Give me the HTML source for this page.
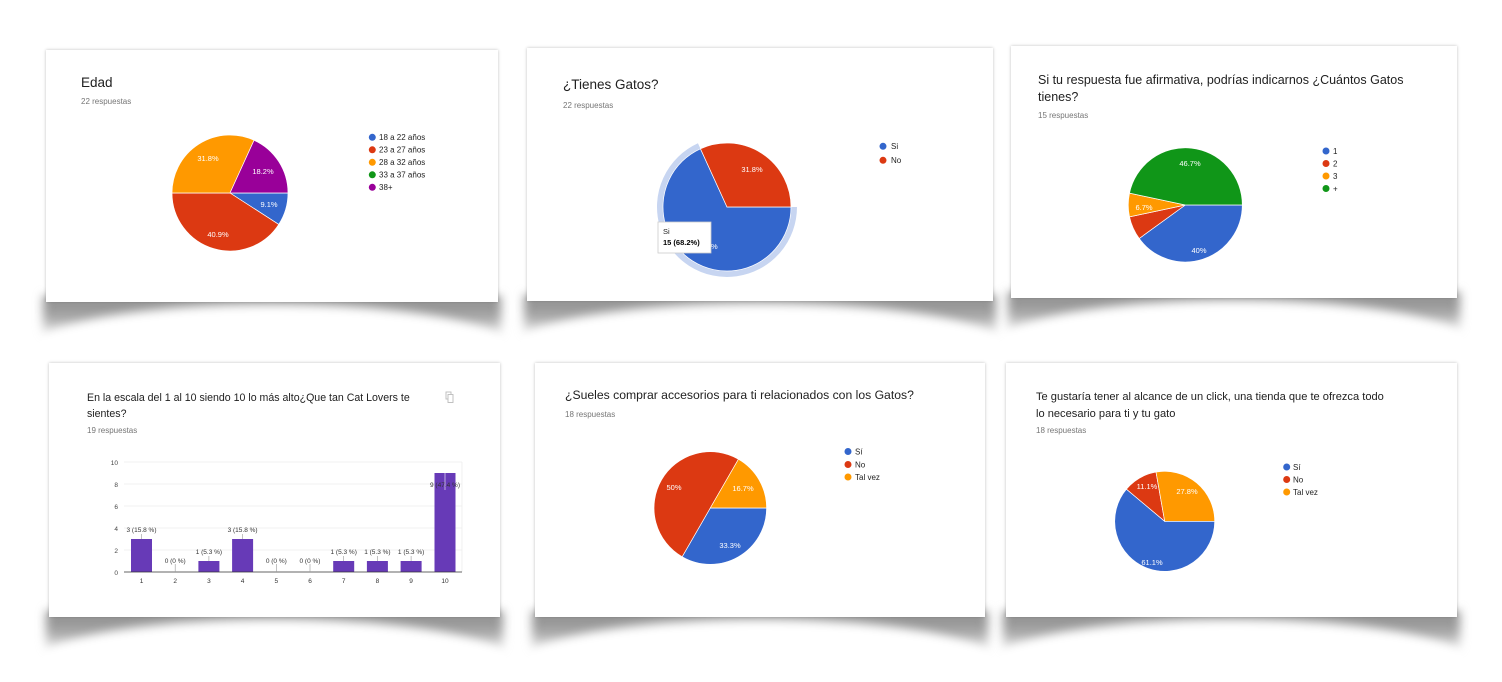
<!DOCTYPE html>
<html><head><meta charset="utf-8">
<style>
html,body{margin:0;padding:0;background:#fff;width:1502px;height:682px;overflow:hidden;position:relative;font-family:"Liberation Sans",Arial,sans-serif}
.wrap{position:absolute}
.sh{position:absolute;left:-3px;right:-3px;top:calc(100% - 6px);height:40px;background:linear-gradient(#888,#a8a8a8 55%,rgba(220,220,220,0));filter:blur(5px)}
.el{position:absolute;left:-2%;width:104%;top:calc(100% + 2px);height:90px;border-radius:50%;background:#fff;filter:blur(5px)}
.card{position:absolute;inset:0;background:#fff;box-shadow:0 0 3px rgba(0,0,0,.25)}
svg{position:absolute;left:0;top:0}
</style></head><body>
<div class="wrap" style="left:46px;top:50px;width:452px;height:252px"><div class="sh"></div><div class="el"></div><div class="card"></div></div>
<div class="wrap" style="left:527px;top:48px;width:466px;height:253px"><div class="sh"></div><div class="el"></div><div class="card"></div></div>
<div class="wrap" style="left:1011px;top:46px;width:446px;height:252px"><div class="sh"></div><div class="el"></div><div class="card"></div></div>
<div class="wrap" style="left:49px;top:363px;width:451px;height:254px"><div class="sh"></div><div class="el"></div><div class="card"></div></div>
<div class="wrap" style="left:535px;top:363px;width:450px;height:254px"><div class="sh"></div><div class="el"></div><div class="card"></div></div>
<div class="wrap" style="left:1006px;top:363px;width:451px;height:254px"><div class="sh"></div><div class="el"></div><div class="card"></div></div>

<svg width="1502" height="682" viewBox="0 0 1502 682" font-family="Liberation Sans, Arial, sans-serif">
<g fill="#212121">
<text x="81" y="87" font-size="13.5">Edad</text>
<text x="563" y="89" font-size="13.5">¿Tienes Gatos?</text>
<text x="1038" y="84" font-size="12.5">Si tu respuesta fue afirmativa, podrías indicarnos ¿Cuántos Gatos</text>
<text x="1038" y="101" font-size="12.5">tienes?</text>
<text x="87" y="401" font-size="10.6">En la escala del 1 al 10 siendo 10 lo más alto¿Que tan Cat Lovers te</text>
<text x="87" y="417" font-size="10.6">sientes?</text>
<text x="565" y="399" font-size="12.2">¿Sueles comprar accesorios para ti relacionados con los Gatos?</text>
<text x="1036" y="400" font-size="11.1">Te gustaría tener al alcance de un click, una tienda que te ofrezca todo</text>
<text x="1036" y="417" font-size="11.1">lo necesario para ti y tu gato</text>
</g>
<g fill="#757575" font-size="8">
<text x="81" y="104">22 respuestas</text>
<text x="563" y="108">22 respuestas</text>
<text x="1038" y="118">15 respuestas</text>
<text x="87" y="433">19 respuestas</text>
<text x="565" y="417">18 respuestas</text>
<text x="1036" y="433">18 respuestas</text>
</g>

<g stroke="#fff" stroke-width="0.7">
<path d="M230,193 L288,193 A58,58 0 0 1 278.75,224.42 Z" fill="#3366cc"/>
<path d="M230,193 L278.75,224.42 A58,58 0 0 1 172,193 Z" fill="#dc3912"/>
<path d="M230,193 L172,193 A58,58 0 0 1 254.05,140.22 Z" fill="#ff9900"/>
<path d="M230,193 L254.05,140.22 A58,58 0 0 1 288,193 Z" fill="#990099"/>
</g>
<g fill="#fff" font-size="7.5" text-anchor="middle">
<text x="269" y="207">9.1%</text><text x="218" y="237">40.9%</text><text x="208" y="161">31.8%</text><text x="263" y="174">18.2%</text>
</g>
<g font-size="8" fill="#222">
<circle cx="372.3" cy="137.3" r="3.5" fill="#3366cc"/><text x="379" y="140">18 a 22 años</text>
<circle cx="372.3" cy="149.8" r="3.5" fill="#dc3912"/><text x="379" y="152.5">23 a 27 años</text>
<circle cx="372.3" cy="162.3" r="3.5" fill="#ff9900"/><text x="379" y="165">28 a 32 años</text>
<circle cx="372.3" cy="174.8" r="3.5" fill="#109618"/><text x="379" y="177.5">33 a 37 años</text>
<circle cx="372.3" cy="187.3" r="3.5" fill="#990099"/><text x="379" y="190">38+</text>
</g>

<path d="M794,207 A67,67 0 1 1 699.2,146" fill="none" stroke="#c7d5f1" stroke-width="6"/>
<g stroke="#fff" stroke-width="0.7">
<path d="M727,207 L791,207 A64,64 0 1 1 700.46,148.76 Z" fill="#3366cc"/>
<path d="M727,207 L700.46,148.76 A64,64 0 0 1 791,207 Z" fill="#dc3912"/>
</g>
<text x="752" y="172" fill="#fff" font-size="7.5" text-anchor="middle">31.8%</text>
<text x="711" y="249" fill="#fff" font-size="7.5">%</text>
<rect x="658" y="222" width="53" height="31" fill="#fff" stroke="#ccc" stroke-width="0.8"/>
<text x="663" y="234" font-size="7.5" fill="#222">Si</text>
<text x="663" y="245" font-size="7.5" fill="#000" font-weight="bold">15 (68.2%)</text>
<g font-size="8" fill="#222">
<circle cx="883" cy="146.3" r="3.5" fill="#3366cc"/><text x="891" y="149">Si</text>
<circle cx="883" cy="160.3" r="3.5" fill="#dc3912"/><text x="891" y="163">No</text>
</g>

<g stroke="#fff" stroke-width="0.7">
<path d="M1185.3,205 L1242.3,205 A57,57 0 0 1 1139.2,238.5 Z" fill="#3366cc"/>
<path d="M1185.3,205 L1139.2,238.5 A57,57 0 0 1 1129.5,216.85 Z" fill="#dc3912"/>
<path d="M1185.3,205 L1129.5,216.85 A57,57 0 0 1 1129.5,193.15 Z" fill="#ff9900"/>
<path d="M1185.3,205 L1129.5,193.15 A57,57 0 0 1 1242.3,205 Z" fill="#109618"/>
</g>
<g fill="#fff" font-size="7.5" text-anchor="middle">
<text x="1190" y="166">46.7%</text><text x="1144" y="210">6.7%</text><text x="1199" y="253">40%</text>
</g>
<g font-size="8" fill="#222">
<circle cx="1326" cy="151" r="3.5" fill="#3366cc"/><text x="1333" y="154">1</text>
<circle cx="1326" cy="163.5" r="3.5" fill="#dc3912"/><text x="1333" y="166.5">2</text>
<circle cx="1326" cy="176" r="3.5" fill="#ff9900"/><text x="1333" y="179">3</text>
<circle cx="1326" cy="188.5" r="3.5" fill="#109618"/><text x="1333" y="191.5">+</text>
</g>

<g stroke="#ececec" stroke-width="0.8">
<line x1="124" y1="462" x2="462" y2="462"/><line x1="124" y1="484" x2="462" y2="484"/>
<line x1="124" y1="506" x2="462" y2="506"/><line x1="124" y1="528" x2="462" y2="528"/>
<line x1="124" y1="550" x2="462" y2="550"/><line x1="462" y1="462" x2="462" y2="572"/>
</g>
<g font-size="6.5" fill="#444" text-anchor="end">
<text x="118" y="465">10</text><text x="118" y="487">8</text><text x="118" y="509">6</text>
<text x="118" y="531">4</text><text x="118" y="553">2</text><text x="118" y="575">0</text>
</g>
<g fill="#673ab7">
<rect x="131" y="539" width="21" height="33"/>
<rect x="198.4" y="561" width="21" height="11"/>
<rect x="232.1" y="539" width="21" height="33"/>
<rect x="333.2" y="561" width="21" height="11"/>
<rect x="366.9" y="561" width="21" height="11"/>
<rect x="400.6" y="561" width="21" height="11"/>
<rect x="434.5" y="473" width="21" height="99"/>
</g>
<line x1="124" y1="572" x2="462" y2="572" stroke="#333" stroke-width="0.8"/>
<g stroke="#999" stroke-width="0.6">
<line x1="141.5" y1="534" x2="141.5" y2="539"/><line x1="175.2" y1="564" x2="175.2" y2="572"/>
<line x1="208.9" y1="556" x2="208.9" y2="561"/><line x1="242.6" y1="534" x2="242.6" y2="539"/>
<line x1="276.3" y1="564" x2="276.3" y2="572"/><line x1="310" y1="564" x2="310" y2="572"/>
<line x1="343.7" y1="556" x2="343.7" y2="561"/><line x1="377.4" y1="556" x2="377.4" y2="561"/>
<line x1="411.1" y1="556" x2="411.1" y2="561"/><line x1="445" y1="473" x2="445" y2="490" stroke="#fff"/>
</g>
<g font-size="6.5" fill="#333" text-anchor="middle">
<text x="141.5" y="532">3 (15.8 %)</text><text x="175.2" y="563">0 (0 %)</text>
<text x="208.9" y="554">1 (5.3 %)</text><text x="242.6" y="532">3 (15.8 %)</text>
<text x="276.3" y="563">0 (0 %)</text><text x="310" y="563">0 (0 %)</text>
<text x="343.7" y="554">1 (5.3 %)</text><text x="377.4" y="554">1 (5.3 %)</text>
<text x="411.1" y="554">1 (5.3 %)</text><text x="445" y="487">9 (47.4 %)</text>
</g>
<g font-size="6.5" fill="#333" text-anchor="middle">
<text x="141.5" y="583">1</text><text x="175.2" y="583">2</text><text x="208.9" y="583">3</text>
<text x="242.6" y="583">4</text><text x="276.3" y="583">5</text><text x="310" y="583">6</text>
<text x="343.7" y="583">7</text><text x="377.4" y="583">8</text><text x="411.1" y="583">9</text>
<text x="445" y="583">10</text>
</g>
<g fill="none" stroke="#bbb" stroke-width="0.9">
<rect x="446" y="392" width="5" height="7"/><rect x="448" y="394.5" width="5" height="8" fill="#fff"/>
</g>

<g stroke="#fff" stroke-width="0.7">
<path d="M710.3,508 L766.6,508 A56.3,56.3 0 0 1 682.15,556.76 Z" fill="#3366cc"/>
<path d="M710.3,508 L682.15,556.76 A56.3,56.3 0 0 1 738.45,459.24 Z" fill="#dc3912"/>
<path d="M710.3,508 L738.45,459.24 A56.3,56.3 0 0 1 766.6,508 Z" fill="#ff9900"/>
</g>
<g fill="#fff" font-size="7.5" text-anchor="middle">
<text x="674" y="490">50%</text><text x="743" y="491">16.7%</text><text x="730" y="548">33.3%</text>
</g>
<g font-size="8" fill="#222">
<circle cx="848" cy="451.5" r="3.5" fill="#3366cc"/><text x="855" y="454.5">Sí</text>
<circle cx="848" cy="464.5" r="3.5" fill="#dc3912"/><text x="855" y="467.5">No</text>
<circle cx="848" cy="477" r="3.5" fill="#ff9900"/><text x="855" y="480">Tal vez</text>
</g>

<g stroke="#fff" stroke-width="0.7">
<path d="M1164.7,521.3 L1214.7,521.3 A50,50 0 1 1 1126.4,489.16 Z" fill="#3366cc"/>
<path d="M1164.7,521.3 L1126.4,489.16 A50,50 0 0 1 1156.02,472.06 Z" fill="#dc3912"/>
<path d="M1164.7,521.3 L1156.02,472.06 A50,50 0 0 1 1214.7,521.3 Z" fill="#ff9900"/>
</g>
<g fill="#fff" font-size="7.5" text-anchor="middle">
<text x="1152" y="565">61.1%</text><text x="1147" y="489">11.1%</text><text x="1187" y="494">27.8%</text>
</g>
<g font-size="8" fill="#222">
<circle cx="1286.7" cy="467" r="3.5" fill="#3366cc"/><text x="1293" y="470">Sí</text>
<circle cx="1286.7" cy="479.5" r="3.5" fill="#dc3912"/><text x="1293" y="482.5">No</text>
<circle cx="1286.7" cy="492" r="3.5" fill="#ff9900"/><text x="1293" y="495">Tal vez</text>
</g>
</svg>
</body></html>
